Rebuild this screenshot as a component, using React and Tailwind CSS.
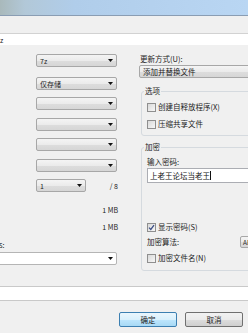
const font = { fontFamily: '"Noto Sans CJK SC", "DejaVu Sans", sans-serif' };

const Arrow = () => (
  <svg width="5" height="3" viewBox="0 0 5 3" className="shrink-0">
    <path d="M0 0H5L2.5 3Z" fill="#111" />
  </svg>
);

const Combo = ({ text, className = "", white = false }) => (
  <div
    className={`h-[13px] shrink-0 border border-[#a7a7a7] rounded-[2px] flex items-center pl-[3px] pr-[3px] ${
      white
        ? "bg-white"
        : "bg-[linear-gradient(#f4f4f4,#ebebeb_50%,#dddddd_51%,#d6d6d6)]"
    } ${className}`}
  >
    <span className="flex-1 text-[7px] leading-[10px] text-[#1c1c1c] whitespace-nowrap">{text}</span>
    <Arrow />
  </div>
);

const Check = ({ label, checked = false, className = "" }) => (
  <div className={`flex items-center h-[10px] ${className}`}>
    <div className="w-[9px] h-[9px] border border-[#8f8f8f] bg-[linear-gradient(135deg,#d9d9d9,#f7f7f7)] flex items-center justify-center shrink-0">
      {checked && (
        <svg width="7" height="7" viewBox="0 0 7 7">
          <path d="M1 3.6L2.8 5.4L6 1.2" stroke="#3d4f86" strokeWidth="1.3" fill="none" />
        </svg>
      )}
    </div>
    <span className="ml-[2px] text-[7.5px] leading-[10px] text-[#1c1c1c] whitespace-nowrap">{label}</span>
  </div>
);

const Group = ({ title, className = "", children }) => (
  <div className={`ml-[17px] w-[140px] shrink-0 border border-[#d5dadf] rounded-[3px] flex flex-col ${className}`}>
    <span className="-mt-[6px] ml-[2px] px-[1px] w-fit bg-[#f0f0f0] text-[7.5px] leading-[10px] text-[#1c1c1c]">
      {title}
    </span>
    {children}
  </div>
);

export default function App() {
  return (
    <div className="w-[248px] h-[333px] overflow-hidden bg-[#f0f0f0] flex flex-col" style={font}>
      {/* title bar */}
      <div className="h-[16px] shrink-0 border-b border-[#8a9db3] bg-[linear-gradient(90deg,#a9b9bb_0%,#b2c8d8_10%,#b0cdea_30%,#b9d6f3_100%)]" />
      <div className="h-[18px] shrink-0 border-b border-[#d2d2d2]" />
      <div className="h-[11px] shrink-0 bg-white flex items-center">
        <span className="-ml-[4px] text-[7px] leading-[10px] text-[#222]">7z</span>
      </div>

      {/* body */}
      <div className="h-[241px] shrink-0 flex">
        {/* left column */}
        <div className="w-[124px] shrink-0 flex flex-col">
          <Combo text="7z" className="mt-[9px] ml-[36px] w-[81px]" />
          <Combo text="仅存储" className="mt-[10px] ml-[36px] w-[81px]" />
          <Combo className="mt-[7px] ml-[36px] w-[81px]" />
          <Combo className="mt-[8px] ml-[36px] w-[81px]" />
          <Combo className="mt-[7px] ml-[36px] w-[81px]" />
          <Combo className="mt-[8px] ml-[36px] w-[81px]" />
          <div className="mt-[7px] flex items-center">
            <Combo text="1" className="ml-[36px] w-[50px]" />
            <span className="ml-auto mr-[6px] text-[7px] leading-[10px] text-[#1c1c1c]">/ 8</span>
          </div>
          <span className="mt-[13px] w-[118px] text-right text-[7px] leading-[10px] text-[#1c1c1c]">1 MB</span>
          <span className="mt-[7px] w-[118px] text-right text-[7px] leading-[10px] text-[#1c1c1c]">1 MB</span>
          <span className="mt-[8px] -ml-[1px] text-[7.5px] leading-[10px] text-[#1c1c1c]">s:</span>
          <Combo white className="mt-[2px] -ml-[2px] w-[119px] border-[#b5b5b5]" />
        </div>

        {/* right column */}
        <div className="flex-1 flex flex-col">
          <span className="mt-[9px] ml-[16px] text-[7.5px] leading-[10px] text-[#1c1c1c] whitespace-nowrap">
            更新方式(U):
          </span>
          <Combo text={<span className="text-[7.5px]">添加并替换文件</span>} className="mt-[1px] ml-[15px] w-[140px] h-[12px]" />

          <Group title="选项" className="mt-[13px] h-[45px]">
            <Check label="创建自释放程序(X)" className="mt-[6px] ml-[5px]" />
            <Check label="压缩共享文件" className="mt-[7px] ml-[5px]" />
          </Group>

          <Group title="加密" className="mt-[11px] h-[124px]">
            <span className="mt-[5px] ml-[5px] text-[7.5px] leading-[10px] text-[#1c1c1c]">输入密码:</span>
            <div className="mt-[1px] ml-[5px] h-[15px] w-[130px] bg-white border border-[#abadb3] flex items-center pl-[2px]">
              <span className="text-[7.5px] leading-[10px] text-[#111]">上老王论坛当老王</span>
              <span className="w-px h-[9px] bg-[#111]" />
            </div>
            <Check label="显示密码(S)" checked className="mt-[39px] ml-[5px]" />
            <div className="mt-[4px] ml-[5px] h-[12px] flex items-center">
              <span className="w-[93px] text-[7.5px] leading-[10px] text-[#1c1c1c]">加密算法:</span>
              <div className="h-[12px] w-[40px] border border-[#a7a7a7] rounded-[2px] bg-[linear-gradient(#f4f4f4,#ebebeb_50%,#dddddd_51%,#d6d6d6)] flex items-center pl-[2px]">
                <span className="text-[6.5px] leading-[10px] text-[#1c1c1c]">AES-256</span>
              </div>
            </div>
            <Check label="加密文件名(N)" className="mt-[5px] ml-[5px]" />
          </Group>
        </div>
      </div>

      {/* parameters field */}
      <div className="h-[15px] shrink-0 bg-white border-t border-b border-[#c9c9c9]" />

      {/* buttons */}
      <div className="flex pt-[11px] pl-[119px] gap-[8px]">
        <button className="w-[58px] h-[15px] shrink-0 rounded-[2px] border border-[#3c7fb1] bg-[linear-gradient(#eaf6fd,#d9f0fc_50%,#bee6fd_51%,#a7d9f5)] text-[7.5px] leading-[10px] text-[#1c1c1c] flex items-center justify-center">
          确定
        </button>
        <button className="w-[58px] h-[15px] shrink-0 rounded-[2px] border border-[#707070] bg-[linear-gradient(#f2f2f2,#ebebeb_50%,#dddddd_51%,#cfcfcf)] text-[7.5px] leading-[10px] text-[#1c1c1c] flex items-center justify-center">
          取消
        </button>
      </div>
    </div>
  );
}
